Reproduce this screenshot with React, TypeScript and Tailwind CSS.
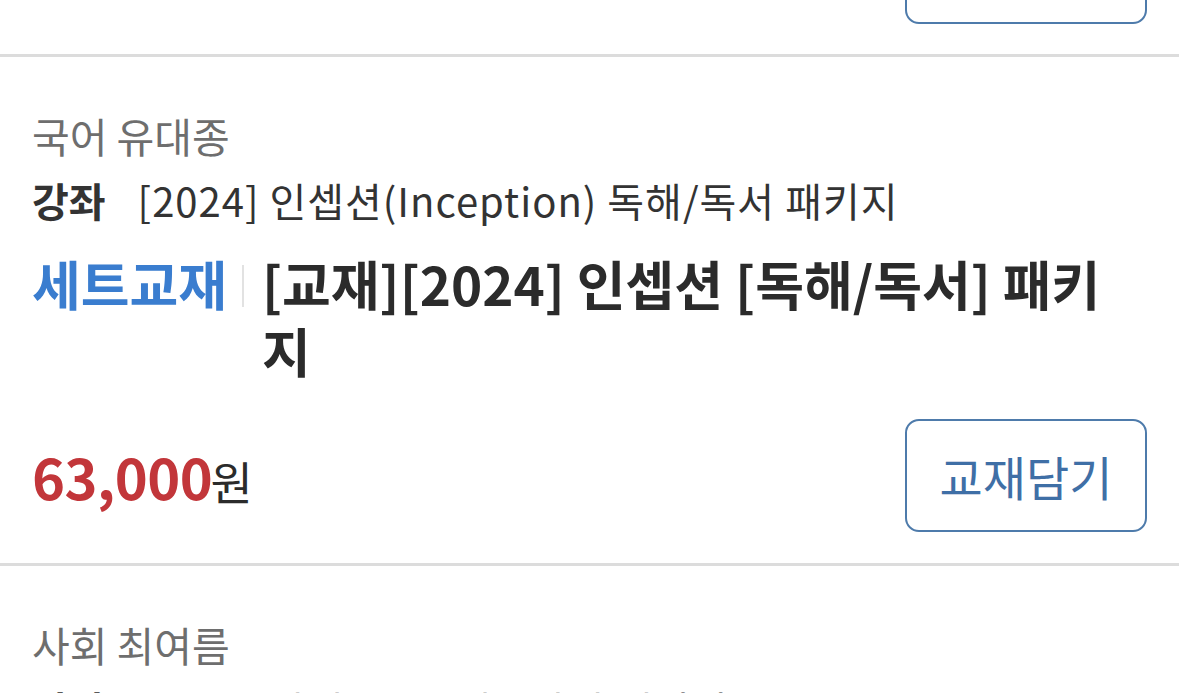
import React from "react";

type Item = {
  teacher: string;
  lecture: string;
  label: string;
  title: string;
  price: string;
};

const items: Item[] = [
  {
    teacher: "국어 유대종",
    lecture: "[2024] 인셉션(Inception) 독해/독서 패키지",
    label: "세트교재",
    title: "[교재][2024] 인셉션 [독해/독서] 패키지",
    price: "63,000",
  },
  {
    teacher: "사회 최여름",
    lecture: "[2024] 사회·문화 개념완성 패키지",
    label: "세트교재",
    title: "[교재][2024] 사회·문화 개념완성 패키지",
    price: "48,000",
  },
];

function CartButton() {
  return (
    <button className="w-[242px] h-[113px] shrink-0 rounded-[14px] border-2 border-[#4e7bab] bg-white text-[47px] leading-none text-[#3f6fa6]">
      교재담기
    </button>
  );
}

function BookItem({ item }: { item: Item }) {
  return (
    <div className="px-8 pt-[52px] pb-[31px] border-b-[3px] border-[#dcdcdc]">
      <p className="text-[41px] leading-[52px] text-[#6e6e6e]">{item.teacher}</p>
      <p className="mt-[13px] text-[40px] leading-[52px] text-[#333]">
        <span className="font-bold">강좌</span>
        <span className="ml-[32px] tracking-[1px]">{item.lecture}</span>
      </p>
      <div className="mt-[24px] flex items-start">
        <span className="shrink-0 text-[53px] leading-[67px] font-bold text-[#3a7dcf]">
          {item.label}
        </span>
        <span className="shrink-0 ml-[15px] mr-[18px] mt-[15px] w-[2px] h-[42px] bg-[#e2e2e2]" />
        <span className="max-w-[870px] text-[53px] leading-[67px] font-bold text-[#2b2b2b]">
          {item.title}
        </span>
      </div>
      <div className="mt-[35px] flex items-center justify-between">
        <p className="leading-none">
          <span className="text-[56px] font-bold text-[#c2363a] tracking-[-0.5px]">{item.price}</span>
          <span className="ml-[-2px] text-[46px] text-[#2b2b2b]">원</span>
        </p>
        <CartButton />
      </div>
    </div>
  );
}

export default function App() {
  return (
    <div
      className="h-[693px] w-[1179px] overflow-hidden bg-white"
      style={{ fontFamily: '"Noto Sans CJK KR", "Noto Sans", sans-serif' }}
    >
      <div className="px-8 pb-[30px] border-b-[3px] border-[#dcdcdc]">
        <div className="mt-[-89px] flex justify-end">
          <CartButton />
        </div>
      </div>
      {items.map((item) => (
        <BookItem key={item.teacher} item={item} />
      ))}
    </div>
  );
}
